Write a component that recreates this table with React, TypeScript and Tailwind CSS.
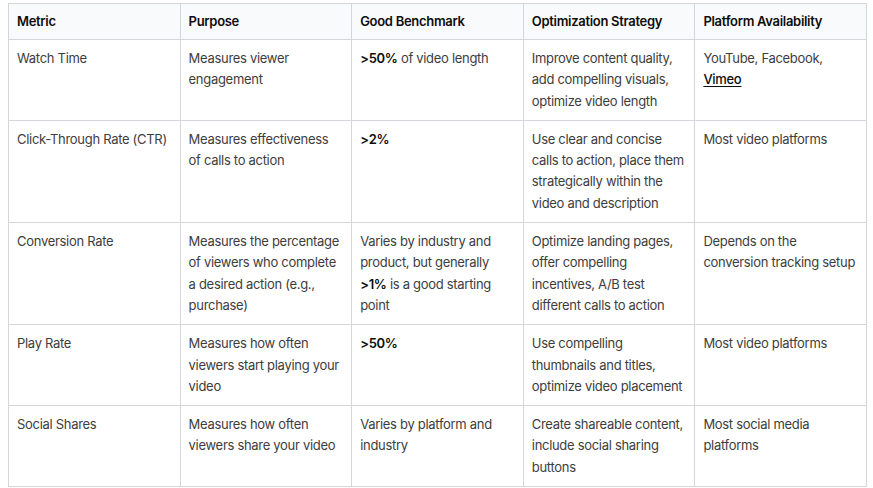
const rows: { metric: string; purpose: string; bench: React.ReactNode; strategy: string; platform: React.ReactNode }[] = [
  {
    metric: "Watch Time",
    purpose: "Measures viewer engagement",
    bench: (
      <>
        <strong className="font-semibold text-[#0d0d0d]">&gt;50%</strong> of video length
      </>
    ),
    strategy: "Improve content quality, add compelling visuals, optimize video length",
    platform: (
      <>
        YouTube, Facebook,{" "}
        <a className="font-medium text-[#0d0d0d] underline underline-offset-2">Vimeo</a>
      </>
    ),
  },
  {
    metric: "Click-Through Rate (CTR)",
    purpose: "Measures effectiveness of calls to action",
    bench: <strong className="font-semibold text-[#0d0d0d]">&gt;2%</strong>,
    strategy:
      "Use clear and concise calls to action, place them strategically within the video and description",
    platform: "Most video platforms",
  },
  {
    metric: "Conversion Rate",
    purpose: "Measures the percentage of viewers who complete a desired action (e.g., purchase)",
    bench: (
      <>
        Varies by industry and product, but generally{" "}
        <strong className="font-semibold text-[#0d0d0d]">&gt;1%</strong> is a good starting point
      </>
    ),
    strategy: "Optimize landing pages, offer compelling incentives, A/B test different calls to action",
    platform: "Depends on the conversion tracking setup",
  },
  {
    metric: "Play Rate",
    purpose: "Measures how often viewers start playing your video",
    bench: <strong className="font-semibold text-[#0d0d0d]">&gt;50%</strong>,
    strategy: "Use compelling thumbnails and titles, optimize video placement",
    platform: "Most video platforms",
  },
  {
    metric: "Social Shares",
    purpose: "Measures how often viewers share your video",
    bench: "Varies by platform and industry",
    strategy: "Create shareable content, include social sharing buttons",
    platform: "Most social media platforms",
  },
];

const headers = ["Metric", "Purpose", "Good Benchmark", "Optimization Strategy", "Platform Availability"];

export default function App() {
  return (
    <div className="min-h-screen bg-white pl-2 pt-[3px] font-['Inter',sans-serif] text-[13px] tracking-[-0.3px] text-[#3d3d3d]">
      <table className="w-[859px] table-fixed border-collapse border border-[#d4d6dc]">
        <thead>
          <tr className="bg-[#f9fafb]">
            {headers.map((h) => (
              <th
                key={h}
                className="border border-[#d4d6dc] px-2 py-2 text-left align-top font-semibold leading-[19px] text-[#0d0d0d]"
              >
                {h}
              </th>
            ))}
          </tr>
        </thead>
        <tbody>
          {rows.map((r) => (
            <tr key={r.metric}>
              {[r.metric, r.purpose, r.bench, r.strategy, r.platform].map((c, i) => (
                <td key={i} className="border border-[#d4d6dc] px-2 py-2 align-top leading-[21.3px]">
                  {c}
                </td>
              ))}
            </tr>
          ))}
        </tbody>
      </table>
    </div>
  );
}
